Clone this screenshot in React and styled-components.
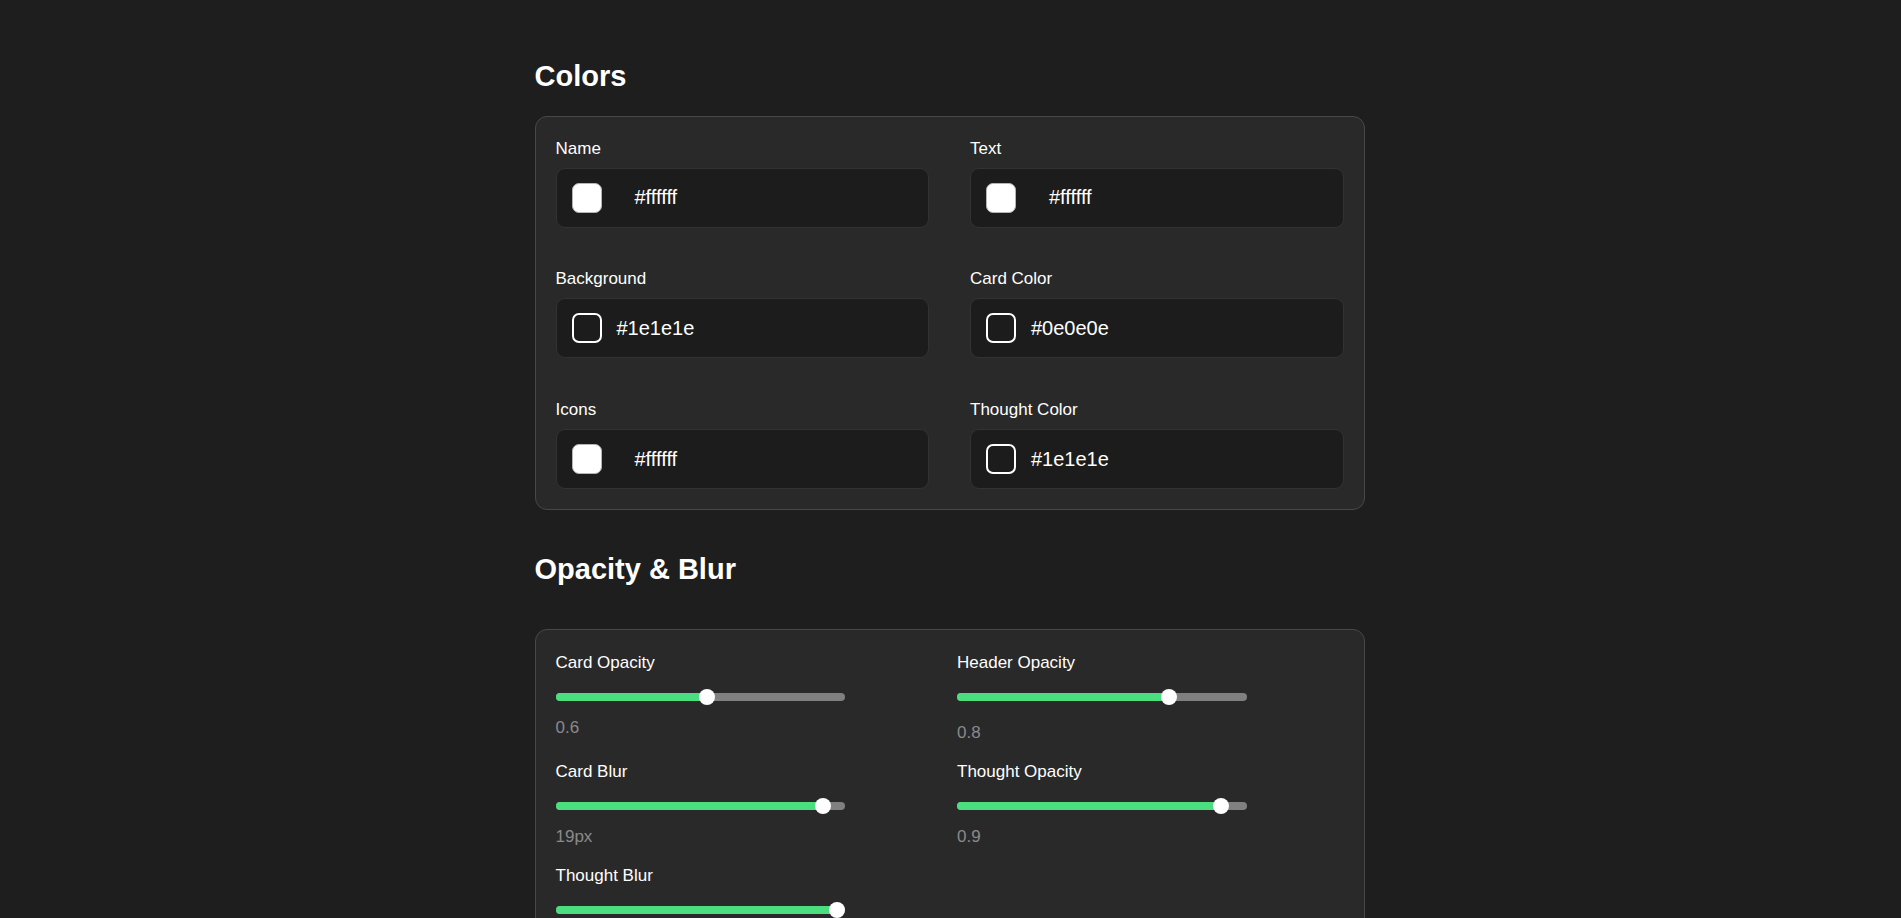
import React from "react";
import styled, { createGlobalStyle } from "styled-components";

const GlobalStyle = createGlobalStyle`
    html {
        scrollbar-width: none;
    }
    html::-webkit-scrollbar {
        display: none;
    }
    body {
        margin: 0;
        background-color: #1e1e1e;
        color: #ffffff;
        font-family: "Liberation Sans", Arial, sans-serif;
    }
`;

const colorFields = [
    { label: "Name", value: "#ffffff", light: true },
    { label: "Text", value: "#ffffff", light: true },
    { label: "Background", value: "#1e1e1e" },
    { label: "Card Color", value: "#0e0e0e" },
    { label: "Icons", value: "#ffffff", light: true },
    { label: "Thought Color", value: "#1e1e1e" },
];

// pos = where the thumb sits along the track (0..1)
const sliders = [
    { label: "Card Opacity", value: "0.6", pos: 0.525 },
    { label: "Header Opacity", value: "0.8", pos: 0.745, lower: true },
    { label: "Card Blur", value: "19px", pos: 0.948 },
    { label: "Thought Opacity", value: "0.9", pos: 0.935 },
    { label: "Thought Blur", value: "20px", pos: 1 },
];

export default function App() {
    return (
        <>
            <GlobalStyle />
            <Page>
                <Container>
                    <Section>
                        <Heading $gap={23}>Colors</Heading>
                        <Card $top={21.5}>
                            <ColorGrid>
                                {colorFields.map((f) => (
                                    <Field key={f.label}>
                                        <Label>{f.label}</Label>
                                        <ColorInput>
                                            <Swatch $light={f.light} />
                                            <HexText $shift={f.light}>{f.value}</HexText>
                                        </ColorInput>
                                    </Field>
                                ))}
                            </ColorGrid>
                        </Card>
                    </Section>

                    <Section $top={43}>
                        <Heading $gap={43}>Opacity &amp; Blur</Heading>
                        <Card $top={23}>
                            <SliderGrid>
                                {sliders.map((s) => (
                                    <Field key={s.label}>
                                        <SliderLabel>{s.label}</SliderLabel>
                                        <Track $lower={s.lower}>
                                            <Fill $pos={s.pos} />
                                            <Thumb $pos={s.pos} />
                                        </Track>
                                        <Value>{s.value}</Value>
                                    </Field>
                                ))}
                            </SliderGrid>
                        </Card>
                    </Section>
                </Container>
            </Page>
        </>
    );
}

const Page = styled.div`
    padding: 60px 2px 60px 0;
`;

const Container = styled.div`
    max-width: 830px;
    margin: 0 auto;
`;

const Section = styled.section`
    margin-top: ${(p) => p.$top || 0}px;
`;

const Heading = styled.h2`
    margin: 0 0 ${(p) => p.$gap}px;
    font-size: 29px;
    line-height: 33px;
    font-weight: 700;
    color: #ffffff;
`;

const Card = styled.div`
    background-color: #292929;
    border: 1px solid #484848;
    border-radius: 12px;
    padding: ${(p) => p.$top}px 20px 20px;
`;

const ColorGrid = styled.div`
    display: grid;
    grid-template-columns: 1fr 1fr;
    column-gap: 41px;
    row-gap: 41.75px;
`;

const Field = styled.div`
    display: flex;
    flex-direction: column;
`;

const Label = styled.label`
    font-size: 17px;
    line-height: 20px;
    color: #ffffff;
    margin-bottom: 9px;
`;

const ColorInput = styled.div`
    box-sizing: border-box;
    height: 60px;
    display: flex;
    align-items: center;
    gap: 15px;
    padding: 0 15px;
    background-color: #1c1c1c;
    border: 1px solid #323232;
    border-radius: 9px;
`;

const Swatch = styled.span`
    box-sizing: border-box;
    flex: none;
    width: 30px;
    height: 30px;
    border-radius: 7px;
    background-color: ${(p) => (p.$light ? "#ffffff" : "transparent")};
    border: ${(p) => (p.$light ? "1px solid #b5b5b5" : "2px solid #ffffff")};
`;

const HexText = styled.span`
    font-size: 20px;
    color: #ffffff;
    margin-left: ${(p) => (p.$shift ? 18 : 0)}px;
`;

const SliderGrid = styled.div`
    display: grid;
    grid-template-columns: 1fr 1fr;
    column-gap: 15px;
    row-gap: 19px;
    align-items: start;
`;

const SliderLabel = styled.span`
    font-size: 17px;
    line-height: 20px;
    color: #ffffff;
    margin-bottom: 20px;
`;

const Track = styled.div`
    position: relative;
    width: 75%;
    height: 8px;
    border-radius: 4px;
    background-color: #808080;
    margin-bottom: ${(p) => (p.$lower ? 22 : 17)}px;
`;

const Fill = styled.div`
    position: absolute;
    left: 0;
    top: 0;
    bottom: 0;
    width: calc(8px + ${(p) => p.$pos} * (100% - 16px));
    border-radius: 4px;
    background-color: #4ade80;
`;

const Thumb = styled.div`
    position: absolute;
    top: 50%;
    left: calc(${(p) => p.$pos} * (100% - 16px));
    width: 16px;
    height: 16px;
    border-radius: 50%;
    background-color: #ffffff;
    transform: translateY(-50%);
`;

const Value = styled.span`
    font-size: 17px;
    line-height: 20px;
    color: #8a8a8a;
`;
